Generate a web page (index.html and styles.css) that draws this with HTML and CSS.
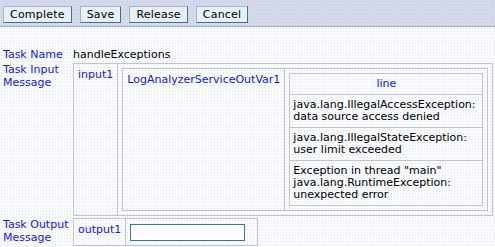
FILE: index.html
```html
<!DOCTYPE html>
<html lang="en">
<head>
    <meta charset="UTF-8">
    <title>Task</title>
    <link rel="stylesheet" href="styles.css">
</head>
<body>
    <div class="toolbar">
        <button>Complete</button>
        <button>Save</button>
        <button>Release</button>
        <button>Cancel</button>
    </div>

    <div class="form">
        <div class="label">Task Name</div>
        <div class="value">handleExceptions</div>

        <div class="label">Task Input Message</div>
        <div class="value">
            <table class="grid wide">
                <tr>
                    <td class="name">input1</td>
                    <td>
                        <table class="grid wide">
                            <tr>
                                <td class="name">LogAnalyzerServiceOutVar1</td>
                                <td class="shrink">
                                    <table class="grid lines">
                                        <tr><th>line</th></tr>
                                        <tr><td>java.lang.IllegalAccessException: data source access denied</td></tr>
                                        <tr><td>java.lang.IllegalStateException: user limit exceeded</td></tr>
                                        <tr><td>Exception in thread "main" java.lang.RuntimeException: unexpected error</td></tr>
                                    </table>
                                </td>
                            </tr>
                        </table>
                    </td>
                </tr>
            </table>
        </div>

        <div class="label">Task Output Message</div>
        <div class="value">
            <table class="grid">
                <tr>
                    <td class="name">output1</td>
                    <td class="field"><input type="text"></td>
                </tr>
            </table>
        </div>
    </div>
</body>
</html>
```

FILE: styles.css
```css
body {
    margin: 0;
    font-family: "DejaVu Sans", Verdana, sans-serif;
    font-size: 11px;
    line-height: 12px;
    color: #000;
    background-color: #f9fbfd;
    background-image: radial-gradient(#dde5ef 0.6px, transparent 0.7px);
    background-size: 3px 3px;
}

.toolbar {
    display: flex;
    gap: 8px;
    height: 27px;
    padding: 6px 0 0 3px;
    box-sizing: border-box;
    border-bottom: 1px solid #a9adbf;
    background-color: #d5d9ec;
    background-image: radial-gradient(#c6cbe2 0.6px, transparent 0.7px);
    background-size: 3px 3px;
}

.toolbar button {
    height: 17px;
    padding: 0 6px;
    font-family: inherit;
    font-size: 11px;
    line-height: 13px;
    color: #000;
    background: #e9eff8;
    border: 1px solid;
    border-color: #9fb4d2 #3f6ea3 #3f6ea3 #9fb4d2;
    letter-spacing: 0.2px;
}

.form {
    display: grid;
    grid-template-columns: 71px 1fr;
    row-gap: 2px;
    padding: 21px 4px 0 2px;
}

.label {
    color: #1414ee;
    line-height: 13px;
    padding-left: 1px;
}

.value {
    line-height: 13px;
}

.grid {
    border-collapse: collapse;
    border: 1px solid #c3c4c9;
}

.grid td,
.grid th {
    border: 1px solid #c3c4c9;
    padding: 4px;
    vertical-align: top;
    text-align: left;
    line-height: 12px;
}

.wide {
    width: 100%;
}

.grid td.name {
    color: #1414ee;
    white-space: nowrap;
    padding-top: 5px;
}

.grid td.shrink {
    width: 1px;
}

.lines {
    width: 194px;
}

.lines th {
    font-weight: normal;
    color: #1414ee;
    text-align: center;
}

.lines td,
.lines th {
    padding: 4px 3px;
}

.field {
    padding: 5px 12px 4px 4px !important;
}

.field input {
    display: block;
    width: 115px;
    height: 17px;
    box-sizing: border-box;
    margin: 0;
    border: 1px solid #3f6ea3;
    background: #fff;
}
```
